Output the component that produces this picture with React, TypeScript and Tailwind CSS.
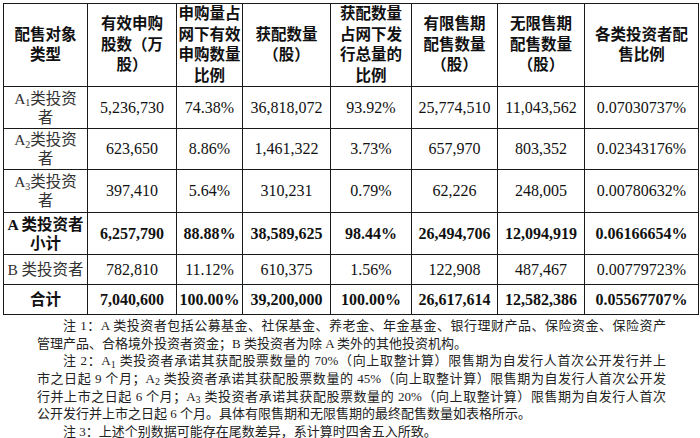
import React from 'react';

const font = { fontFamily: '"Liberation Serif", "Noto Sans CJK SC", serif' };

type Row = {
  label: React.ReactNode;
  values: string[];
  bold?: boolean;
  h: string;
};

const A = ({ n }: { n: number }) => (
  <>
    A<sub className="text-[10px]">{n}</sub>
  </>
);

const rows: Row[] = [
  { label: <><A n={1} />类投资<br />者</>, values: ['5,236,730', '74.38%', '36,818,072', '93.92%', '25,774,510', '11,043,562', '0.07030737%'], h: 'h-[42px]' },
  { label: <><A n={2} />类投资<br />者</>, values: ['623,650', '8.86%', '1,461,322', '3.73%', '657,970', '803,352', '0.02343176%'], h: 'h-[41px]' },
  { label: <><A n={3} />类投资<br />者</>, values: ['397,410', '5.64%', '310,231', '0.79%', '62,226', '248,005', '0.00780632%'], h: 'h-[43px]' },
  { label: <>A 类投资者<br />小计</>, values: ['6,257,790', '88.88%', '38,589,625', '98.44%', '26,494,706', '12,094,919', '0.06166654%'], bold: true, h: 'h-[42px]' },
  { label: <>B 类投资者</>, values: ['782,810', '11.12%', '610,375', '1.56%', '122,908', '487,467', '0.00779723%'], h: 'h-[30px]' },
  { label: <>合计</>, values: ['7,040,600', '100.00%', '39,200,000', '100.00%', '26,617,614', '12,582,386', '0.05567707%'], bold: true, h: 'h-[30px]' },
];

const headers: React.ReactNode[] = [
  <>配售对象<br />类型</>,
  <>有效申购<br />股数（万<br />股）</>,
  <>申购量占<br />网下有效<br />申购数量<br />比例</>,
  <>获配数量<br />（股）</>,
  <>获配数量<br />占网下发<br />行总量的<br />比例</>,
  <>有限售期<br />配售数量<br />（股）</>,
  <>无限售期<br />配售数量<br />（股）</>,
  <>各类投资者配<br />售比例</>,
];

const widths = ['w-[84px]', 'w-[89px]', 'w-[66px]', 'w-[88px]', 'w-[81px]', 'w-[86px]', 'w-[87px]', 'w-[114px]'];

const cell = 'border border-[#1a1a1a] text-center align-middle p-0';
const line = 'h-[17.65px] whitespace-nowrap';
const full = `${line} text-justify [text-align-last:justify]`;

export default function App() {
  return (
    <div className="w-[700px] h-[438px] bg-white text-[#111] overflow-hidden pt-[3px] pl-[3px]" style={font}>
      <table className="table-fixed border-collapse w-[695px]">
        <colgroup>
          {widths.map((w) => (
            <col key={w} className={w} />
          ))}
        </colgroup>
        <thead>
          <tr className="h-[82px]">
            {headers.map((h, i) => (
              <th key={i} className={`${cell} text-[15.5px] leading-[20.5px] font-semibold`}>
                {h}
              </th>
            ))}
          </tr>
        </thead>
        <tbody>
          {rows.map((r, i) => (
            <tr key={i} className={r.h}>
              <td className={`${cell} text-[15.5px] leading-[19px] ${r.bold ? 'font-bold' : 'text-[#333]'}`}>{r.label}</td>
              {r.values.map((v, j) => (
                <td key={j} className={`${cell} text-[16px] ${r.bold ? 'font-bold' : ''}`}>
                  {v}
                </td>
              ))}
            </tr>
          ))}
        </tbody>
      </table>

      <div className="pl-[34px] pr-[34px] pt-[2px] text-[13px] leading-[17.65px] text-[#222]">
        <p className={`indent-[26px] ${full}`}>
          注 1：A 类投资者包括公募基金、社保基金、养老金、年金基金、银行理财产品、保险资金、保险资产
        </p>
        <p className={line}>管理产品、合格境外投资者资金；B 类投资者为除 A 类外的其他投资机构。</p>
        <p className={`indent-[26px] ${full}`}>
          注 2：<A n={1} /> 类投资者承诺其获配股票数量的 70%（向上取整计算）限售期为自发行人首次公开发行并上
        </p>
        <p className={full}>
          市之日起 9 个月；<A n={2} /> 类投资者承诺其获配股票数量的 45%（向上取整计算）限售期为自发行人首次公开发
        </p>
        <p className={full}>
          行并上市之日起 6 个月；<A n={3} /> 类投资者承诺其获配股票数量的 20%（向上取整计算）限售期为自发行人首次
        </p>
        <p className={line}>公开发行并上市之日起 6 个月。具体有限售期和无限售期的最终配售数量如表格所示。</p>
        <p className={`indent-[26px] ${line}`}>注 3：上述个别数据可能存在尾数差异，系计算时四舍五入所致。</p>
      </div>
    </div>
  );
}
